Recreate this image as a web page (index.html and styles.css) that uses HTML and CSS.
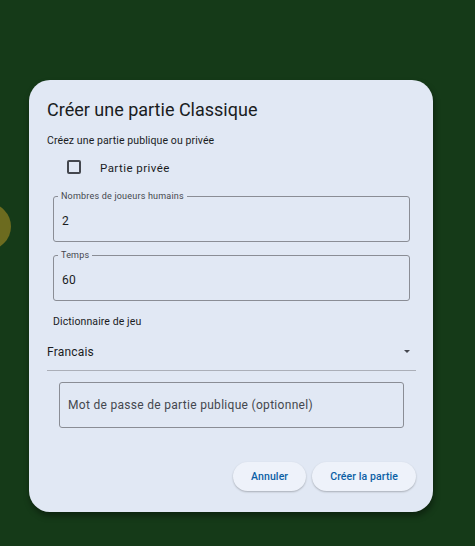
FILE: index.html
```html
<!DOCTYPE html>
<html lang="fr">
<head>
<meta charset="utf-8">
<title>Créer une partie Classique</title>
<link rel="stylesheet" href="styles.css">
</head>
<body>
<div class="blob"></div>
<div class="dialog">
  <h1 class="title">Créer une partie Classique</h1>
  <p class="subtitle">Créez une partie publique ou privée</p>
  <label class="check">
    <span class="box"></span>
    <span class="check-label">Partie privée</span>
  </label>
  <div class="field">
    <span class="field-label">Nombres de joueurs humains</span>
    <span class="field-value">2</span>
  </div>
  <div class="field field-gap">
    <span class="field-label">Temps</span>
    <span class="field-value">60</span>
  </div>
  <p class="dict-label">Dictionnaire de jeu</p>
  <div class="select">
    <span class="select-value">Francais</span>
    <span class="arrow"></span>
  </div>
  <div class="field field-pass">
    <span class="placeholder">Mot de passe de partie publique (optionnel)</span>
  </div>
  <div class="actions">
    <button class="btn">Annuler</button>
    <button class="btn">Créer la partie</button>
  </div>
</div>
</body>
</html>
```
FILE: styles.css
```css
html, body {
  margin: 0;
  padding: 0;
}
body {
  width: 475px;
  height: 546px;
  background: #153a18;
  font-family: Roboto, "Noto Sans", sans-serif;
  position: relative;
  overflow: hidden;
}
.blob {
  position: absolute;
  left: -36px;
  top: 203px;
  width: 47px;
  height: 47px;
  border-radius: 50%;
  background: #6c6b1f;
}
.dialog {
  position: relative;
  margin: 80px 0 0 29px;
  width: 404px;
  height: 432px;
  box-sizing: border-box;
  background: #e1e8f4;
  border-radius: 21px;
  padding: 0 17px 0 18px;
  box-shadow: 1px 4px 6px rgba(0, 0, 0, 0.4);
  display: flex;
  flex-direction: column;
}
.title {
  margin: 0;
  padding-top: 18px;
  font-size: 18px;
  line-height: 24px;
  font-weight: 400;
  color: #1a1c1e;
}
.subtitle {
  margin: 12px 0 0;
  font-size: 10.5px;
  line-height: 14px;
  color: #1a1c1e;
  letter-spacing: 0.1px;
}
.check {
  display: flex;
  align-items: center;
  margin: 9px 0 0 20px;
  height: 20px;
}
.box {
  width: 10px;
  height: 10px;
  border: 2px solid #44474e;
  border-radius: 2px;
}
.check-label {
  margin-left: 19px;
  padding-top: 1px;
  font-size: 11.5px;
  letter-spacing: 0.45px;
  color: #1a1c1e;
}
.field {
  position: relative;
  margin: 19px 6px 0;
  height: 46px;
  box-sizing: border-box;
  border: 1px solid #8a8d95;
  border-radius: 3px;
  display: flex;
  align-items: center;
  padding-left: 8px;
}
.field-gap {
  margin-top: 13px;
}
.field-label {
  position: absolute;
  top: -7px;
  left: 4px;
  padding: 0 3px;
  background: #e1e8f4;
  font-size: 9px;
  line-height: 12px;
  color: #44474e;
  letter-spacing: 0.2px;
}
.field-value {
  padding-top: 3px;
  font-size: 12px;
  color: #1a1c1e;
  letter-spacing: 0.3px;
}
.dict-label {
  margin: 14px 0 0 6px;
  font-size: 10.5px;
  line-height: 14px;
  color: #1a1c1e;
  letter-spacing: 0.1px;
}
.select {
  margin-top: 15px;
  height: 26px;
  border-bottom: 1.5px solid #abafb8;
  display: flex;
  align-items: flex-start;
  justify-content: space-between;
  padding-right: 6px;
}
.select-value {
  font-size: 12px;
  line-height: 16px;
  color: #1a1c1e;
  letter-spacing: 0.2px;
}
.arrow {
  margin-top: 6px;
  width: 0;
  height: 0;
  border-left: 3.75px solid transparent;
  border-right: 3.75px solid transparent;
  border-top: 3.75px solid #44474e;
}
.field-pass {
  margin: 11px 12px 0;
}
.placeholder {
  font-size: 12px;
  color: #44474e;
  letter-spacing: 0.3px;
}
.actions {
  margin-top: 34px;
  display: flex;
  justify-content: flex-end;
  gap: 6px;
}
.btn {
  height: 29px;
  padding: 0 18px;
  border: none;
  border-radius: 15px;
  background: #eef2fa;
  color: #0b5fa5;
  font-family: Roboto, "Noto Sans", sans-serif;
  font-size: 10.5px;
  font-weight: 500;
  letter-spacing: 0.1px;
  box-shadow: 0 1px 2px rgba(0, 0, 0, 0.25);
}
```
